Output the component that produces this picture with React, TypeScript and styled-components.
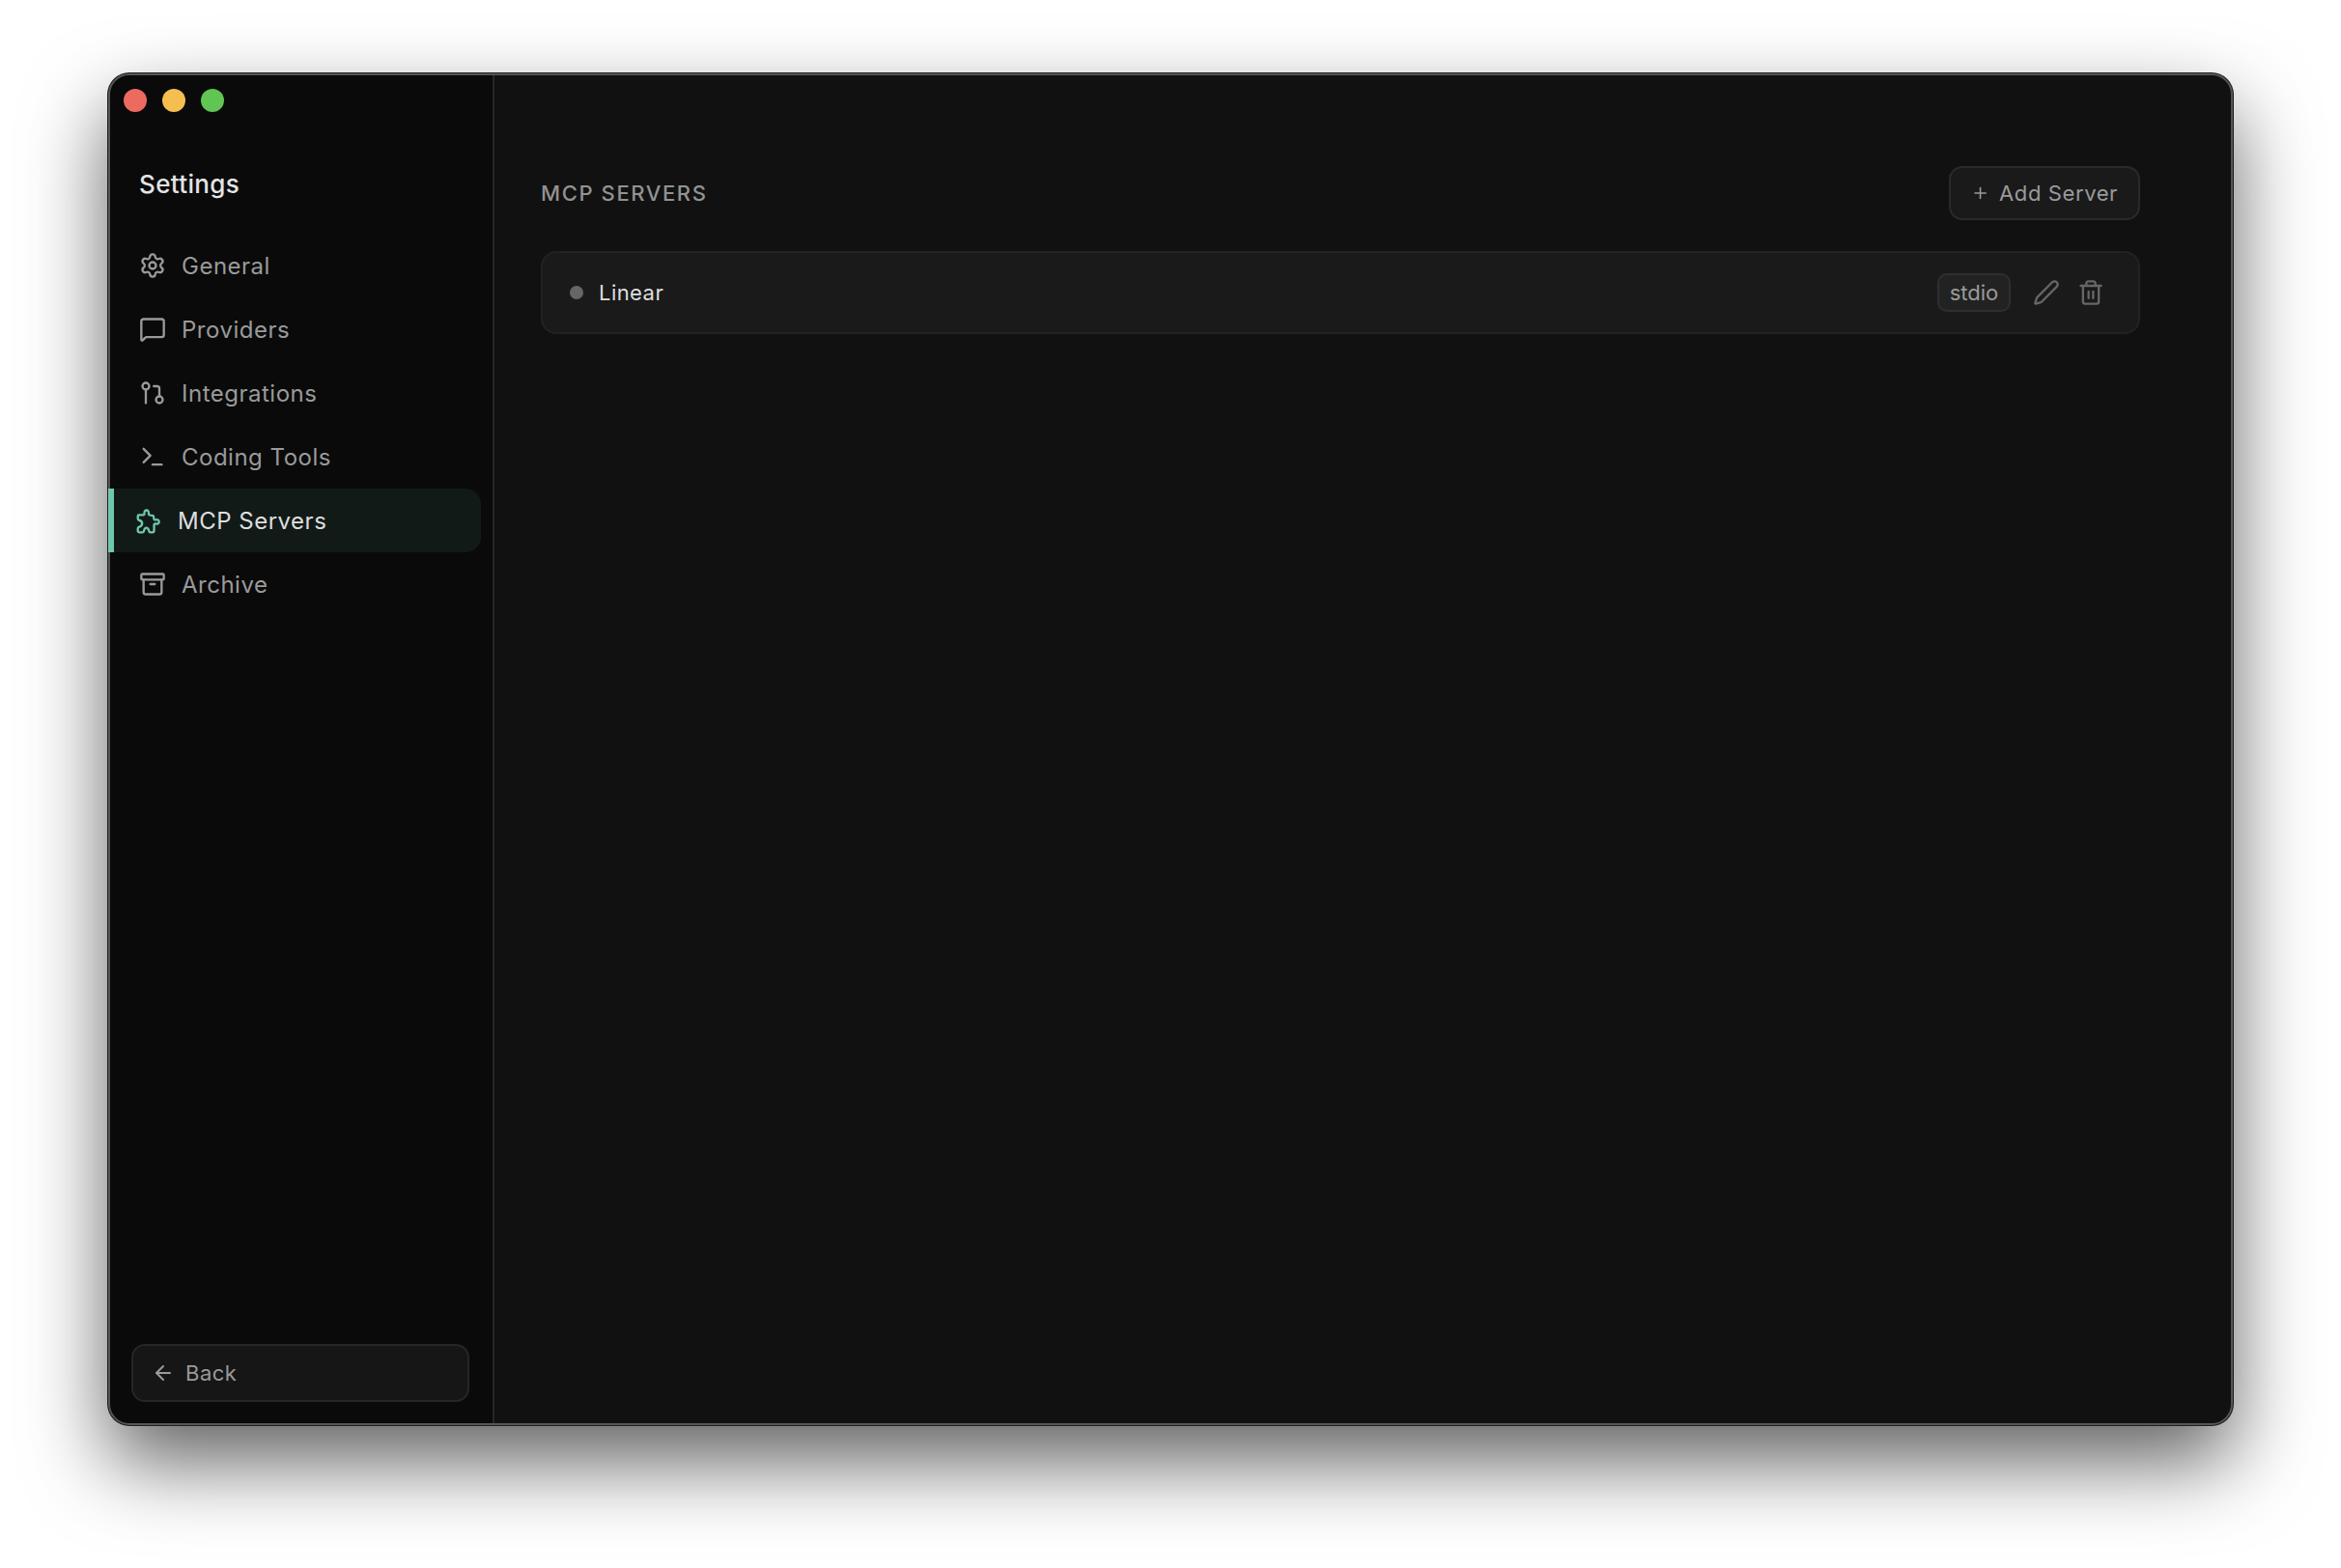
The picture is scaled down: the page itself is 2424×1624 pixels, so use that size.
import React from "react";
import styled, { createGlobalStyle } from "styled-components";
import { Settings, MessageSquare, GitPullRequest, Terminal, Archive, ArrowLeft, Plus, Pen, Trash2 } from "lucide-react";

const Global = createGlobalStyle`
  html, body { margin: 0; padding: 0; background: #fff; }
  * { box-sizing: border-box; }
  body { font-family: Inter, "Liberation Sans", sans-serif; -webkit-font-smoothing: antialiased; }
`;

const Stage = styled.div`
  width: 2424px;
  height: 1624px;
  padding: 76px 112px 148px;
  background: #fff;
  overflow: hidden;
`;

const Window = styled.div`
  position: relative;
  display: flex;
  width: 2200px;
  height: 1400px;
  border-radius: 22px;
  background: #111;
  box-shadow: 0 0 0 1px #202020, 0 38px 84px rgba(0, 0, 0, 0.62);
  &::after {
    content: "";
    position: absolute;
    inset: 0;
    border-radius: 22px;
    border: 2px solid #555;
    pointer-events: none;
  }
`;

const Sidebar = styled.aside`
  width: 400px;
  flex: none;
  display: flex;
  flex-direction: column;
  background: #0a0a0a;
  border-right: 2px solid #262626;
  border-radius: 22px 0 0 22px;
  padding: 16px 0 24px;
`;

const TrafficLights = styled.div`
  display: flex;
  gap: 16px;
  padding-left: 16px;
  height: 24px;
`;

const Light = styled.span<{ $color: string }>`
  width: 24px;
  height: 24px;
  border-radius: 50%;
  background: ${(p) => p.$color};
`;

const Title = styled.h1`
  margin: 55px 0 31px 32px;
  font-size: 26px;
  line-height: 40px;
  font-weight: 500;
  letter-spacing: 0.35px;
  color: #e4e4e4;
`;

const Nav = styled.nav`
  position: relative;
  z-index: 1;
  display: flex;
  flex-direction: column;
  padding-right: 12px;
`;

const NavItem = styled.div<{ $active?: boolean }>`
  display: flex;
  align-items: center;
  gap: ${(p) => (p.$active ? "17px" : "16px")};
  height: 66px;
  padding-left: ${(p) => (p.$active ? "21px" : "32px")};
  font-size: 24px;
  letter-spacing: 0.5px;
  color: ${(p) => (p.$active ? "#dedede" : "#9a9a9a")};
  background: ${(p) => (p.$active ? "#121a18" : "transparent")};
  border-left: ${(p) => (p.$active ? "6px solid #6fc8ae" : "0")};
  border-radius: ${(p) => (p.$active ? "0 16px 16px 0" : "0")};
  svg {
    flex: none;
    color: ${(p) => (p.$active ? "#6fc8ae" : "#9a9a9a")};
  }
`;

const Spacer = styled.div`
  flex: 1;
`;

const BackButton = styled.button`
  display: flex;
  align-items: center;
  gap: 11px;
  align-self: flex-start;
  margin-left: 24px;
  width: 350px;
  height: 60px;
  padding: 0 19px;
  background: #161616;
  border: 2px solid #262626;
  border-radius: 14px;
  font: inherit;
  font-size: 22px;
  letter-spacing: 0.5px;
  color: #9a9a9a;
`;

const Main = styled.main`
  flex: 1;
  display: flex;
  flex-direction: column;
  padding: 96px 96px 0 48px;
`;

const Header = styled.header`
  display: flex;
  align-items: center;
  justify-content: space-between;
  height: 56px;
  margin-bottom: 32px;
`;

const SectionTitle = styled.h2`
  margin: 0;
  font-size: 22px;
  font-weight: 500;
  letter-spacing: 1.6px;
  color: #929292;
  text-transform: uppercase;
`;

const AddButton = styled.button`
  display: flex;
  align-items: center;
  gap: 10px;
  width: 198px;
  height: 56px;
  padding: 0 21px;
  background: #1a1a1a;
  border: 2px solid #2a2a2a;
  border-radius: 14px;
  font: inherit;
  font-size: 22px;
  letter-spacing: 0.6px;
  white-space: nowrap;
  color: #9a9a9a;
`;

const ServerRow = styled.div`
  display: flex;
  align-items: center;
  height: 86px;
  padding: 0 35px 0 28px;
  background: #1a1a1a;
  border: 2px solid #222;
  border-radius: 16px;
`;

const StatusDot = styled.span`
  width: 14px;
  height: 14px;
  border-radius: 50%;
  background: #666;
  margin-right: 16px;
`;

const ServerName = styled.span`
  flex: 1;
  font-size: 22px;
  letter-spacing: 0.45px;
  color: #dedede;
`;

const Badge = styled.span`
  display: flex;
  align-items: center;
  justify-content: center;
  width: 76px;
  height: 40px;
  margin-right: 23px;
  background: #222;
  border: 2px solid #2f2f2f;
  border-radius: 10px;
  font-size: 22px;
  color: #9a9a9a;
`;

const IconActions = styled.div`
  display: flex;
  gap: 18px;
  color: #666;
  svg { display: block; }
`;

function PuzzlePiece({ size = 28, strokeWidth = 2 }: { size?: number; strokeWidth?: number }) {
  return (
    <svg width={size} height={size} viewBox="0 0 24 24" fill="none" stroke="currentColor" strokeWidth={strokeWidth} strokeLinecap="round" strokeLinejoin="round">
      <path d="M4 7.2L7.8 7.2C8.8 7.2 9.2 6.6 9 5.6C8.8 4.2 9.6 3 10.9 3C12.2 3 13 4.2 12.8 5.6C12.6 6.6 13.2 7.2 14.2 7.4L16 7.6C16.8 7.7 17.3 8.2 17.3 9L17.4 10.4C17.5 11.2 18.2 11.6 19 11.4C20.6 11 22 11.8 22 13.2C22 14.6 20.6 15.4 19 15C18.2 14.8 17.6 15.2 17.6 16L17.6 21C17.6 22 17 22.6 16 22.6L14.4 22.6C13.6 22.6 13.2 22 13 21.2C12.6 19.6 11.8 18.6 10.8 18.6C9.8 18.6 9 19.6 8.6 21.2C8.4 22 8 22.6 7.2 22.6L4.6 22.6C3.8 22.6 3.2 22 3.2 21.2L3.2 19C3.2 18.2 3.8 17.8 4.6 17.6C6.2 17.2 7 16 7 14.8C7 13.6 6.2 12.4 4.6 12C3.8 11.8 3.2 11.4 3.2 10.6L3.2 8.2C3.2 7.5 3.5 7.2 4 7.2Z" />
    </svg>
  );
}

const items = [
  { label: "General", Icon: Settings },
  { label: "Providers", Icon: MessageSquare },
  { label: "Integrations", Icon: GitPullRequest },
  { label: "Coding Tools", Icon: Terminal },
  { label: "MCP Servers", Icon: PuzzlePiece, active: true },
  { label: "Archive", Icon: Archive },
];

export default function App() {
  return (
    <>
      <Global />
      <Stage>
        <Window>
          <Sidebar>
            <TrafficLights>
              <Light $color="#ed6a5e" />
              <Light $color="#f4bf4f" />
              <Light $color="#61c554" />
            </TrafficLights>
            <Title>Settings</Title>
            <Nav>
              {items.map(({ label, Icon, active }) => (
                <NavItem key={label} $active={active}>
                  <Icon size={28} strokeWidth={2} />
                  {label}
                </NavItem>
              ))}
            </Nav>
            <Spacer />
            <BackButton>
              <ArrowLeft size={24} strokeWidth={2} />
              Back
            </BackButton>
          </Sidebar>
          <Main>
            <Header>
              <SectionTitle>MCP Servers</SectionTitle>
              <AddButton>
                <Plus size={24} strokeWidth={2} />
                Add Server
              </AddButton>
            </Header>
            <ServerRow>
              <StatusDot />
              <ServerName>Linear</ServerName>
              <Badge>stdio</Badge>
              <IconActions>
                <Pen size={28} strokeWidth={2} />
                <Trash2 size={28} strokeWidth={2} />
              </IconActions>
            </ServerRow>
          </Main>
        </Window>
      </Stage>
    </>
  );
}
